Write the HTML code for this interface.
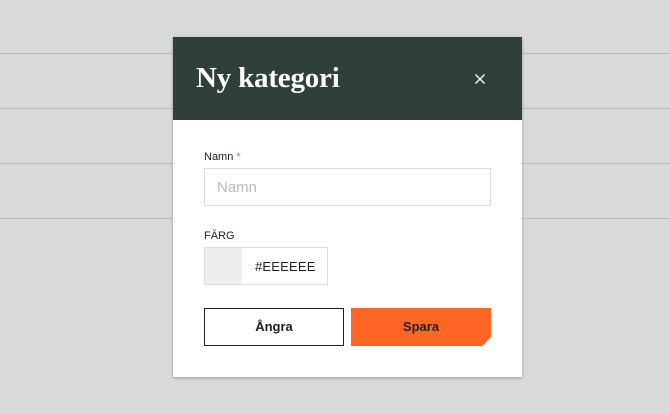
<!DOCTYPE html>
<html><head><style>
body{margin:0;width:670px;height:414px;background:#d8dad9;position:relative;overflow:hidden;font-family:"Liberation Sans",sans-serif}
.l{position:absolute;left:0;width:670px;height:1px;background:#b9bcbb}
.m{position:absolute;left:173px;top:37px;width:349px;height:340px;background:#fff;box-shadow:0 1px 3px rgba(0,0,0,.3)}
.h{position:absolute;left:0;top:0;width:349px;height:83px;background:#2f4039}
.t{position:absolute;left:23px;top:25px;font-family:"Liberation Serif",serif;font-size:29px;font-weight:bold;color:#fff;letter-spacing:-0.2px}
.x{position:absolute;left:302px;top:37px}
.lab{position:absolute;font-size:11px;color:#222}
.in{position:absolute;left:31px;top:131px;box-sizing:border-box;width:287px;height:38px;border:1px solid #ddd;font-size:15px;color:#bbb;padding:10px 12px}
.c{position:absolute;left:31px;top:210px;width:124px;height:38px;border:1px solid #ddd;box-sizing:border-box}
.sw{position:absolute;left:0;top:0;width:37px;height:36px;background:#eee}
.hx{position:absolute;left:50px;top:11px;font-size:13px;color:#222;letter-spacing:0.2px}
.b{position:absolute;top:271px;width:140px;height:38px;box-sizing:border-box;font-size:13px;font-weight:bold;text-align:center;line-height:36px;color:#222}
</style></head><body>
<div class="l" style="top:53px"></div><div class="l" style="top:108px"></div><div class="l" style="top:163px"></div><div class="l" style="top:218px"></div>
<div class="m">
<div class="h"><div class="t">Ny kategori</div>
<svg class="x" width="10" height="10" viewBox="0 0 10 10"><path d="M0.5 0.5L9.5 9.5M9.5 0.5L0.5 9.5" stroke="#fff" stroke-width="1.4"/></svg></div>
<div class="lab" style="left:31px;top:114px">Namn <span style="color:#e55">*</span></div>
<div class="in">Namn</div>
<div class="lab" style="left:31px;top:193px">FÄRG</div>
<div class="c"><div class="sw"></div><div class="hx">#EEEEEE</div></div>
<div class="b" style="left:31px;border:1px solid #222">Ångra</div>
<div class="b" style="left:178px;background:#ff6624;clip-path:polygon(0 0,100% 0,100% 76%,94% 100%,0 100%);line-height:38px">Spara</div>
</div>
</body></html>
